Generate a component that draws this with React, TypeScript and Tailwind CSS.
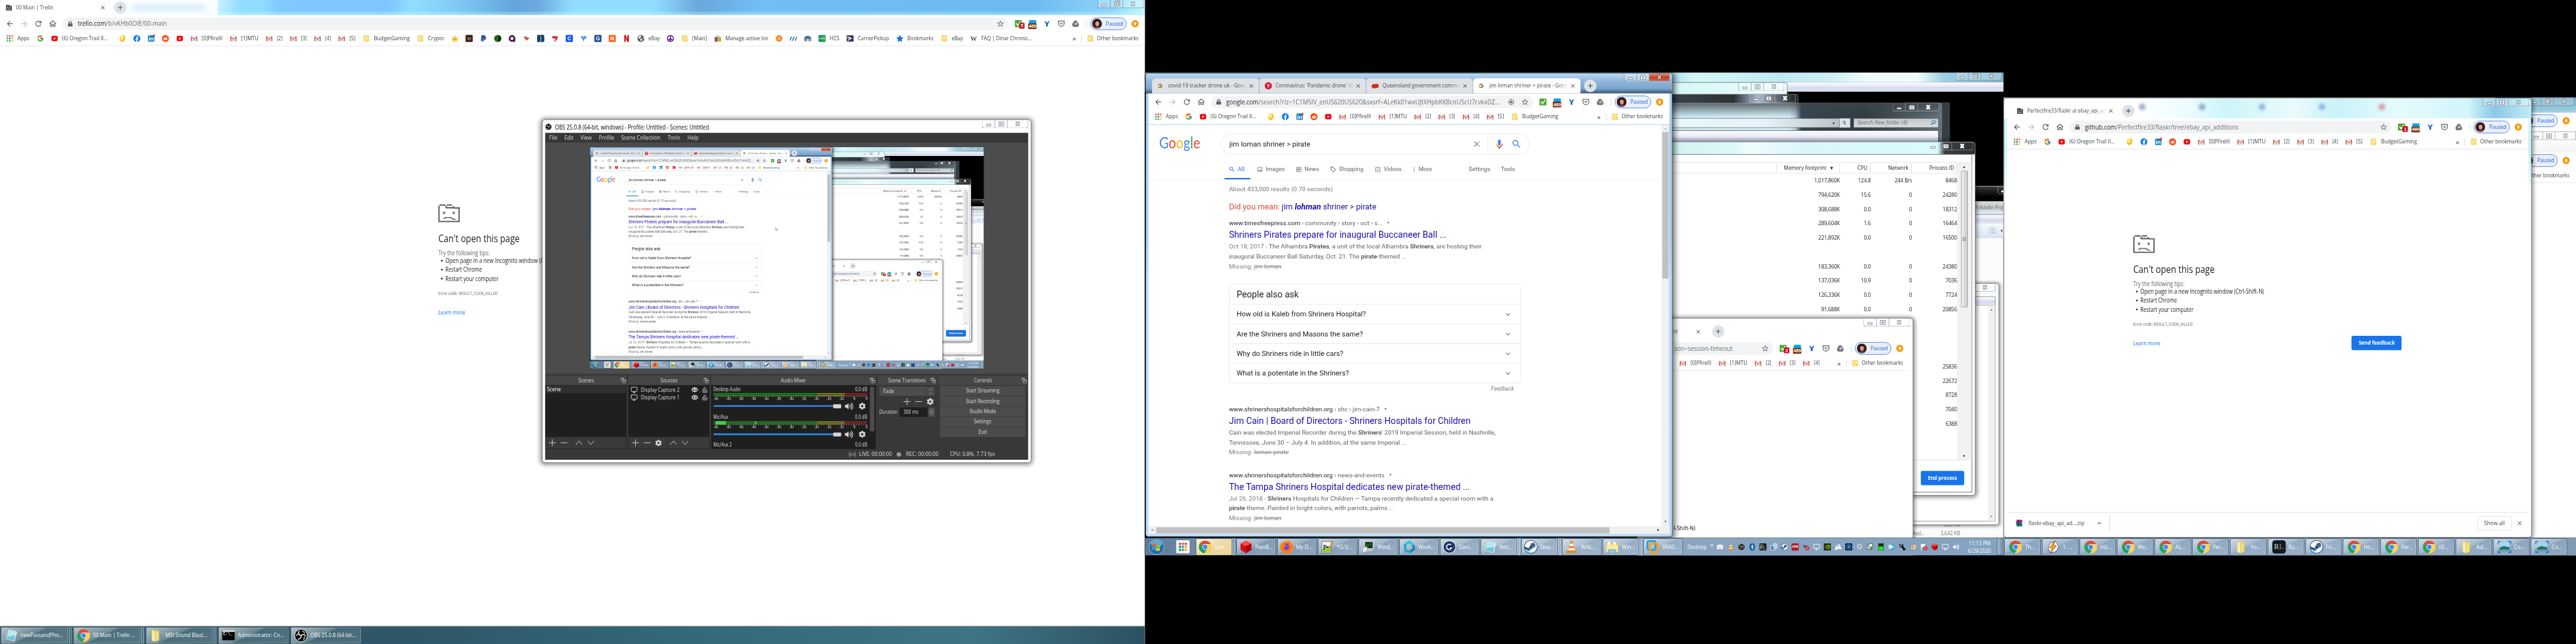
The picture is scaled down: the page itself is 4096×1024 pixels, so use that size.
import React, { ReactNode, useLayoutEffect, useRef } from "react";
import {
  FaFacebook, FaLinkedin, FaReddit, FaPaypal, FaCrown, FaPeace, FaStar, FaGlobeAmericas, FaDiscord,
  FaBluetoothB, FaSteam, FaCog, FaVolumeUp, FaFirefoxBrowser, FaLock,
} from "react-icons/fa";
import { FcGoogle } from "react-icons/fc";
import { SiNvidia, SiCorsair } from "react-icons/si";
import {
  MdArrowBack, MdArrowForward, MdRefresh, MdOutlineHome, MdStarBorder, MdGpsFixed, MdClose, MdAdd, MdSearch,
  MdOutlineImage, MdOutlineArticle, MdOutlineLocalOffer, MdOutlineSlideshow, MdMoreVert, MdKeyboardArrowDown,
} from "react-icons/md";
import { Monitor, Unlock, Eye, Radio } from "lucide-react";

/* One line of text squeezed or stretched to an exact width. */
function Fit({ w, className = "", children }: { w: number; className?: string; children: ReactNode }) {
  const ref = useRef<HTMLSpanElement>(null);
  useLayoutEffect(() => {
    const el = ref.current;
    if (el && el.offsetWidth) el.style.transform = `scaleX(${w / el.offsetWidth})`;
  }, [w, children]);
  return (
    <span className={"block shrink-0 " + className} style={{ width: w }}>
      <span ref={ref} className="inline-block origin-left whitespace-pre">{children}</span>
    </span>
  );
}

/* ---------- icons ---------- */
const Gmail = () => (
  <svg viewBox="0 0 16 16" className="size-4 shrink-0">
    <rect x="1" y="2" width="14" height="12" fill="#eceaea" />
    <path d="M3 14 8 9l5 5z" fill="#d5d2d2" />
    <path d="M1 14V3l7 6 7-6v11h-2V6.5L8 11 3 6.5V14z" fill="#d54b3d" />
  </svg>
);
const YouTube = () => (
  <svg viewBox="0 0 16 16" className="size-4 shrink-0">
    <rect x="1" y="2" width="14" height="12" rx="3" fill="#f00" />
    <path d="M6.3 5.2v5.6L11 8z" fill="#fff" />
  </svg>
);
const BmFolder = () => (
  <svg viewBox="0 0 16 16" className="size-4 shrink-0">
    <path d="M2.5 1.5h11v9l1 4h-12z" fill="#fde48a" stroke="#e8c454" />
    <path d="M11 14.5V11h2.5" fill="none" stroke="#e8c454" />
  </svg>
);
const AppsGrid = () => (
  <div className="grid size-[14px] shrink-0 grid-cols-3 gap-[2px]">
    {["#ea4335", "#ea4335", "#ea4335", "#34a853", "#4285f4", "#fbbc05", "#34a853", "#34a853", "#fbbc05"].map((c, i) => (
      <div key={i} style={{ background: c }} />
    ))}
  </div>
);
const TaskGrid = () => (
  <div className="grid size-[18px] shrink-0 grid-cols-3 gap-[2px]">
    {["#ef2b2b", "#ef2b2b", "#ef2b2b", "#1fa64a", "#2b7de0", "#f6b21b", "#1fa64a", "#1fa64a", "#f6b21b"].map((c, i) => (
      <div key={i} style={{ background: c }} />
    ))}
  </div>
);
const Chrome = ({ className = "size-[30px]" }: { className?: string }) => (
  <svg viewBox="0 0 48 48" className={"shrink-0 " + className}>
    <circle cx="24" cy="24" r="23" fill="#fcd04e" />
    <path d="M24 24 4.1 12.5A23 23 0 0 0 21 46.8L31 28z" fill="#1ea362" />
    <path d="M24 24 4.1 12.5A23 23 0 0 1 44 13.5H24z" fill="#dd4b3e" />
    <circle cx="24" cy="24" r="10.5" fill="#fff" />
    <circle cx="24" cy="24" r="8.3" fill="#4688f4" />
  </svg>
);
const Folder7 = () => (
  <svg viewBox="0 0 32 32" className="size-[30px] shrink-0">
    <path d="M6 3h9l8 2v22l-8 3-9-2z" fill="#e9cf6c" />
    <path d="m6 3 8 4v24l-8-3z" fill="#fbeea6" stroke="#d8ba55" strokeWidth=".6" />
    <path d="m14 7 9-2v22l-9 4z" fill="#f3dc80" stroke="#d0b04a" strokeWidth=".6" />
  </svg>
);
const Explorer = () => (
  <svg viewBox="0 0 32 32" className="size-[30px] shrink-0">
    <path d="M2 5h10l2 3h15v20H2z" fill="#f0d478" stroke="#c9a441" />
    <path d="M5 3h6v8H5zM18 5h7v6h-7z" fill="#fff" />
    <path d="M2 12h28v16H2z" fill="#fbe9a0" />
    <path d="M7 30v-8h18v8h-4v-4H11v4z" fill="#8cc7e8" stroke="#5da3cb" />
  </svg>
);
const Notepad = () => (
  <svg viewBox="0 0 32 32" className="size-[30px] shrink-0">
    <path d="m10 3 18 3-5 24-19-6z" fill="#6fc6d8" stroke="#e8f6fa" />
    <path d="m10 3 18 3-2 10-19 3z" fill="#b9e8ee" />
    <path d="m28 6 2 3-6 21-1 0z" fill="#e8eef0" />
  </svg>
);
const NotepadPP = () => (
  <svg viewBox="0 0 32 32" className="size-[30px] shrink-0">
    <rect x="3" y="3" width="22" height="27" fill="#f7f7f0" stroke="#444" />
    <path d="M4 20h20v9H4z" fill="#8bd12f" />
    <path d="M8 11v12M8 13q5-2 5 2t-5 3M14 17h6M17 14v6M20 17h5" fill="none" stroke="#111" strokeWidth="1.8" />
    <path d="M19 18 28 2l3 2-9 16z" fill="#f0a43c" stroke="#8b5a16" strokeWidth=".6" />
  </svg>
);
const Vlc = ({ className = "size-[30px]" }: { className?: string }) => (
  <svg viewBox="0 0 32 32" className={"shrink-0 " + className}>
    <path d="M4 25h24l2 5H2z" fill="#f08a1c" />
    <path d="M13.5 2h5l7 25h-19z" fill="#f58a1f" />
    <path d="m12 8h8l1.600 6H10.400zM9 19h14l1.600 5H7.400z" fill="#f5f5f5" />
  </svg>
);
const RedCube = ({ className = "size-[30px]" }: { className?: string }) => (
  <svg viewBox="0 0 32 32" className={"shrink-0 " + className}>
    <path d="m16 1 13 7v15l-13 8-13-8V8z" fill="#d90f16" />
    <path d="m16 1 13 7-13 6L3 8z" fill="#ff4a4a" />
    <path d="M16 14v17l13-8V8z" fill="#a90a10" />
  </svg>
);
const Steam = ({ className = "size-[30px]" }: { className?: string }) => (
  <div className={"flex shrink-0 items-center justify-center rounded-full bg-gradient-to-b from-[#10193a] to-[#1d7fb5] " + className}>
    <FaSteam className="size-full text-white/95 [clip-path:circle(46%)]" />
  </div>
);
const Obs = ({ className = "size-[30px]" }: { className?: string }) => (
  <svg viewBox="0 0 32 32" className={"shrink-0 " + className}>
    <circle cx="16" cy="16" r="15" fill="#0a0a0a" stroke="#e6e6e6" strokeWidth="1.500" />
    <g fill="none" stroke="#f0f0f0" strokeWidth="2.400">
      <path d="M12 5a6.500 6.500 0 0 0 4 11" />
      <path d="M27 18a6.500 6.500 0 0 0-11-2" />
      <path d="M8.500 24.500A6.500 6.500 0 0 0 16 16" />
      <path d="M19 5.500a6.500 6.500 0 0 1 5.500 6.500M21.500 26a6.500 6.500 0 0 0 2.500-7M5 17a6.500 6.500 0 0 1 6-5" strokeWidth="1.800" />
    </g>
  </svg>
);
const Winamp = ({ className = "size-[30px]" }: { className?: string }) => (
  <svg viewBox="0 0 32 32" className={"shrink-0 " + className}>
    <path d="m9 6 14-3 6 12-6 12-14 3L4 18z" fill="#fff" stroke="#222" />
    <path d="M20 1 7 18h7l-5 13 15-18h-7z" fill="#f8a22e" stroke="#6d3c05" />
  </svg>
);
const WinVdi = () => (
  <svg viewBox="0 0 32 32" className="size-[30px] shrink-0">
    <rect x="8" y="3" width="20" height="17" fill="#0c2b14" stroke="#ddd" strokeWidth="2" />
    <path d="M10 16l4-8 3 6 4-8 3 7" fill="none" stroke="#37d248" />
    <path d="m3 18 11-3v12l-11 2z" fill="#e7e7e7" stroke="#999" />
    <path d="M15 22h12v4H15z" fill="#ccc" />
  </svg>
);
const WinA = () => (
  <svg viewBox="0 0 32 32" className="size-[30px] shrink-0">
    <g fill="none" strokeWidth="6">
      <path d="M8 9 18 4l9 8" stroke="#36c2e8" />
      <path d="m27 12 1 9-9 7" stroke="#1488b8" />
      <path d="m19 28-11-4L7 9" stroke="#22a8d5" />
    </g>
  </svg>
);
const Dani = () => (
  <svg viewBox="0 0 32 32" className="size-[30px] shrink-0">
    <circle cx="16" cy="16" r="14.500" fill="#0a1a48" stroke="#d5dbe8" strokeWidth="2" />
    <circle cx="16" cy="16" r="9.500" fill="none" stroke="#6f8fe0" strokeWidth="1.500" />
    <path d="M20 12a6 6 0 1 0 1 6h-4" fill="none" stroke="#fff" strokeWidth="2.600" />
  </svg>
);
const VmBox = () => (
  <svg viewBox="0 0 32 32" className="size-[30px] shrink-0">
    <rect x="3" y="2" width="19" height="21" rx="4" fill="none" stroke="#2f9ee0" strokeWidth="5" />
    <rect x="9" y="8" width="19" height="21" rx="4" fill="none" stroke="#f6a51c" strokeWidth="5" />
  </svg>
);
const Runes = () => (
  <div className="flex size-[30px] shrink-0 items-center justify-center rounded-md bg-[#0e1c22] font-['Liberation_Serif'] text-[17px] leading-none text-[#ddd]">
    R<span className="text-[#f06a20]">L</span>
  </div>
);
const RunesSmall = () => (
  <svg viewBox="0 0 16 16" className="size-4 shrink-0">
    <rect width="16" height="16" rx="2" fill="#0e1c22" />
    <path d="M3 13V3h3q2 0 2 2.500T6 8H3l4 5" fill="none" stroke="#ddd" strokeWidth="1.200" />
    <path d="M10 5v8h4" fill="none" stroke="#f06a20" strokeWidth="1.600" />
  </svg>
);
const Cmd = () => (
  <div className="h-[25px] w-[30px] shrink-0 border border-[#bbb] bg-black">
    <div className="h-[4px] bg-[#ddd]" />
    <div className="pl-[2px] font-['Liberation_Mono'] text-[9px] font-bold leading-[10px] text-white">C:\_</div>
  </div>
);
const Capture = () => (
  <svg viewBox="0 0 32 32" className="size-[30px] shrink-0">
    <rect x="4" y="5" width="24" height="22" fill="#9fd6f5" />
    <path d="M4 18 14 14l14 3v10H4z" fill="#2d6f58" />
    <path d="M4 22h24v5H4z" fill="#5aa0c4" />
    <path d="M1 9V3h6M25 3h6v6M31 23v6h-6M7 29H1v-6" fill="none" stroke="#1b76c9" strokeWidth="2.500" />
  </svg>
);
const WinOrb = () => (
  <svg viewBox="0 0 36 36" className="size-9 shrink-0">
    <circle cx="18" cy="18" r="17" fill="#1d6fa6" stroke="#b7dcf0" />
    <ellipse cx="18" cy="10" rx="13" ry="8" fill="#8fcfee" opacity=".6" />
    <path d="M9 12q5-3 8 0l-1 6q-4-3-8 0z" fill="#e8582a" />
    <path d="M18 12q4 3 9 1l-1 6q-5 2-9-1z" fill="#86c440" />
    <path d="M8 19q4-3 8 0l-1 6q-4-3-8 0z" fill="#2fa3e6" />
    <path d="M17 19q4 3 9 1l-1 6q-5 2-9-1z" fill="#fbc52d" />
  </svg>
);
const MicIcon = () => (
  <svg viewBox="0 0 24 24" className="mr-[14px] size-[25px]">
    <rect x="9" y="2" width="6" height="13" rx="3" fill="#4285f4" />
    <path d="M11 18h2v4h-2z" fill="#34a853" />
    <path d="M5 11h2a5 5 0 0 0 1.500 4.500L7 17a7 7 0 0 1-2-6z" fill="#fbbc05" />
    <path d="M12 17a5 5 0 0 0 5-6h2a7 7 0 0 1-12 6l1.500-1.500A5 5 0 0 0 12 17z" fill="#ea4335" />
  </svg>
);
const SadPage = ({ small = false }: { small?: boolean }) => (
  <svg viewBox="0 0 48 40" className={small ? "size-4 shrink-0" : "h-10 w-12"} fill="none" stroke="#5f6368" strokeWidth="3">
    {small ? (
      <>
        <path d="M4 2h24l2 6h14v32H4z" fill="#4b4f54" stroke="none" />
        <path d="M13 16h6v5h-6zM29 16h6v5h-6zM14 33v-4h20v4h-4v-2H18v2z" fill="#fff" stroke="none" />
      </>
    ) : (
      <>
        <path d="M1.500 3v35.500h45V8H34M3 1.500h13M19 1.500h12M17.500 3v5M17 7.500h17V4" />
        <path d="m10.500 16.500 5 5m0-5-5 5M32 16.500l5 5m0-5-5 5" strokeWidth="1.800" />
        <path d="M11 31.500h4v-2h14v2h4v2h6" strokeWidth="2" />
      </>
    )}
  </svg>
);

/* ---------- browser chrome ---------- */
type Bm = { icon: ReactNode; text?: string; w?: number; wide?: boolean };
const Sq = ({ bg, fg = "#fff", t }: { bg: string; fg?: string; t: string }) => (
  <span className="flex size-4 shrink-0 items-center justify-center rounded-[2px] font-['Liberation_Sans'] text-[12px] font-bold leading-none" style={{ background: bg, color: fg }}>
    {t}
  </span>
);
const baseBookmarks: Bm[] = [
  { icon: <AppsGrid />, text: "Apps", w: 27 },
  { icon: <FcGoogle className="size-4" /> },
  { icon: <YouTube />, text: "(6) Oregon Trail II...", w: 102, wide: true },
  { icon: <svg viewBox="0 0 16 16" className="size-4"><ellipse cx="8" cy="8" rx="6" ry="8" fill="#f6c51b" transform="rotate(18 8 8)" /><ellipse cx="6.500" cy="6.500" rx="3" ry="5" fill="#ffef9a" transform="rotate(18 8 8)" /></svg> },
  { icon: <FaFacebook className="size-4 text-[#0f7bf0]" /> },
  { icon: <span className="relative"><FaLinkedin className="size-4 text-[#0077b5]" /><span className="absolute -top-px -right-px size-[5px] rounded-full bg-[#f03b3b]" /></span> },
  { icon: <FaReddit className="size-4 text-[#ff4500]" /> },
  { icon: <YouTube /> },
  { icon: <Gmail />, text: "[0]PfireIII", w: 47 },
  { icon: <Gmail />, text: "[1]MTU", w: 39 },
  { icon: <Gmail />, text: "[2]", w: 13 },
  { icon: <Gmail />, text: "[3]", w: 13 },
  { icon: <Gmail />, text: "[4]", w: 13 },
  { icon: <Gmail />, text: "[5]", w: 14 },
  { icon: <BmFolder />, text: "BudgetGaming", w: 80 },
];
const moreBookmarks: Bm[] = [
  { icon: <BmFolder />, text: "Crypto", w: 36 },
  { icon: <FaCrown className="size-4 text-[#f9b413]" /> },
  { icon: <Sq bg="#2a2320" fg="#f07030" t="w" /> },
  { icon: <FaPaypal className="size-4 text-[#1f4fa5]" /> },
  { icon: <span className="size-4 rounded-full bg-[repeating-linear-gradient(90deg,#0a2d0a_0_2px,#2f9c35_2px_3px)]" /> },
  { icon: <svg viewBox="0 0 16 16" className="size-4"><circle cx="8" cy="8" r="5.500" fill="none" stroke="#4b1152" strokeWidth="4" /><path d="M11 8h4v8h-4z" fill="#4b1152" /></svg> },
  { icon: <svg viewBox="0 0 16 16" className="size-4"><path d="M1 4h6l8 3-7 6-2-3z" fill="#e0444c" /><path d="m7 6 7 2-4 3z" fill="#5780d0" /></svg> },
  { icon: <Sq bg="#14406b" fg="#8ec1f0" t=")" /> },
  { icon: <svg viewBox="0 0 16 16" className="size-4"><path d="M1 3h13q1 6-5 11l-4 1q5-4 4-7H3z" fill="#d42b35" /></svg> },
  { icon: <Sq bg="#1652f0" t="C" /> },
  { icon: <svg viewBox="0 0 16 16" className="size-4"><path d="m1 5 5-3 2 4 2-4 5 3-3 4-2-1-2 7-3-7z" fill="#3c8cf0" /></svg> },
  { icon: <Sq bg="#1d4f9e" t="G" /> },
  { icon: <Sq bg="#f26a21" t="N" /> },
  { icon: <svg viewBox="0 0 16 16" className="size-4"><path d="M3 0h3v16H3zM10 0h3v16h-3z" fill="#b1060f" /><path d="M3 0h3l7 16h-3z" fill="#e50914" /></svg> },
  { icon: <FaGlobeAmericas className="size-4 text-[#5b6065]" />, text: "eBay", w: 25 },
  { icon: <FaPeace className="size-4 text-[#5a0f96]" /> },
  { icon: <BmFolder />, text: "[Main]", w: 33 },
  { icon: <svg viewBox="0 0 16 16" className="size-4"><path d="M5 5V3q3-4 6 0v2" fill="none" stroke="#444" /><path d="M1 5h4v10H1z" fill="#e53238" /><path d="M5 5h3v10H5z" fill="#0064d2" /><path d="M8 5h4v10H8z" fill="#f5af02" /><path d="M12 5h3v10h-3z" fill="#86b817" /></svg>, text: "Manage active list", w: 96 },
  { icon: <svg viewBox="0 0 16 16" className="size-4"><circle cx="8" cy="8" r="6" fill="none" stroke="#f5821f" strokeWidth="3.500" strokeDasharray="3 1" /><circle cx="8" cy="8" r="5.500" fill="#f5821f" /><path d="M5 6.500h6M5 9.500h6" stroke="#fff" strokeWidth="1.500" /></svg> },
  { icon: <svg viewBox="0 0 16 16" className="size-4"><path d="m0 13 4-9M6 13l4-9M12 13l4-9" stroke="#1a69c5" strokeWidth="2.200" /></svg> },
  { icon: <svg viewBox="0 0 16 16" className="size-4"><path d="M0 14V9a8 7 0 0 1 16 0v5h-2V9h-1v5h-2V9h-1v5H9V9H7v5H5V9H4v5H2z" fill="#52708f" /></svg> },
  { icon: <svg viewBox="0 0 16 16" className="size-4"><path d="M0 0h16v16H0z" fill="#128a6a" /><path d="M8 0h8v16H8z" fill="#2aa64a" /><g fill="none" stroke="#fff"><circle cx="3.500" cy="8" r="1.500" /><circle cx="8" cy="8" r="1.500" /><circle cx="12.500" cy="8" r="1.500" /></g></svg>, text: "HCS", w: 22 },
  { icon: <svg viewBox="0 0 16 16" className="size-4"><path d="M0 1h16v14H0z" fill="#333366" /><path d="m2 4 11 3-11 7 3-5 5-1-8-1z" fill="#fff" /></svg>, text: "CarrierPickup", w: 70 },
  { icon: <FaStar className="size-4 text-[#1a73e8]" />, text: "Bookmarks", w: 58 },
  { icon: <BmFolder />, text: "eBay", w: 25 },
  { icon: <span className="flex w-4 justify-center font-['Liberation_Serif'] text-[15px] font-bold leading-none text-[#555]">W</span>, text: "FAQ | Dinar Chronic...", w: 113 },
];
const BmItem = ({ b }: { b: Bm }) => (
  <div className={"flex items-center gap-[9px] " + (b.wide ? "mr-[25px]" : "mr-[16px]")}>
    <span className="flex w-4 shrink-0 justify-center">{b.icon}</span>
    {b.text && <Fit w={b.w || 40}>{b.text}</Fit>}
  </div>
);
function Pill() {
  return (
    <div className="flex h-7 w-[81px] shrink-0 items-center gap-[9px] rounded-full border border-[#1a62cf] bg-[#e9effa] pl-[3px]">
      <svg viewBox="0 0 22 22" className="size-[22px] shrink-0">
        <circle cx="11" cy="11" r="11" fill="#3c1c1c" />
        <ellipse cx="11.500" cy="10.500" rx="4.200" ry="6" fill="#d5a18d" />
        <path d="M5 9q2-7 7-6t5 6q-3-4-7-3t-5 3z" fill="#2b1212" />
        <path d="M5 20q6-5 13-1l-3 3H8z" fill="#6c4a52" />
      </svg>
      <Fit w={38} className="text-[13px] text-[#1a62cf]">Paused</Fit>
    </div>
  );
}
const UpdateDot = () => (
  <div className="flex size-4 shrink-0 items-center justify-center rounded-full bg-[#f29900]">
    <svg viewBox="0 0 10 10" className="size-[10px]"><path d="m5 1 4 4H6.500v4h-3V5H1z" fill="#fff" /></svg>
  </div>
);
function Extensions({ badge }: { badge?: string }) {
  return (
    <div className="flex shrink-0 items-center gap-4 font-['Liberation_Sans'] text-[11px] font-bold leading-none text-white">
      <div className="relative">
        <svg viewBox="0 0 16 16" className="size-4"><rect width="16" height="16" rx="2" fill="#4ca72e" /><path d="m3.500 7 3.500 5 6-9" fill="none" stroke="#fff" strokeWidth="2.200" /></svg>
        {badge && <span className="absolute top-[6px] left-[10px] rounded-[2px] bg-[#d0021b] px-[3px] py-[1px]">{badge}</span>}
      </div>
      <div className="relative size-4">
        <div className="h-[11px] w-4 rounded-[1px] bg-[#0aa2ee]" />
        <span className="absolute top-[7px] -left-[2px] rounded-[2px] bg-[#7a3107] px-[1px] py-[1px] tracking-[-0.3px]">469</span>
      </div>
      <svg viewBox="0 0 16 16" className="size-4"><path d="m2 2 4 1 2 4 2-4 4-1-4 7v5H6V9z" fill="#1c66b8" /><path d="m3 3 3 5" stroke="#6bb5ee" /></svg>
      <svg viewBox="0 0 16 16" className="size-4" fill="none" stroke="#6f7276" strokeWidth="2"><path d="M1.500 2h13v5.500a6.500 6.500 0 0 1-13 0z" /><path d="m5 6 3 3 3-3" /></svg>
      <svg viewBox="0 0 16 16" className="size-4"><path d="M5.500 1h5L16 10l-2.500 5h-11L0 10z" fill="#757575" /><path d="m8 6 2.500 4h-5z" fill="#fff" /><path d="M10.500 1 16 10h-5L8 6z" fill="#9a9a9a" /></svg>
    </div>
  );
}
function Toolbar({ host, path, hostW, badge, extra, target, short }: { host: string; path: string; hostW: number; badge?: string; extra?: boolean; target?: boolean; short?: boolean }) {
  const list = short ? baseBookmarks.slice(8, 13) : extra ? [...baseBookmarks, ...moreBookmarks] : baseBookmarks;
  return (
    <div className="border-b border-[#dadce0] bg-white">
      <div className="flex h-9 items-center pr-[14px] pt-[1px]">
        {!short && (
          <div className="flex w-[140px] shrink-0 items-center gap-3 pl-[12px] text-[20px] text-[#5a5e63]">
            <MdArrowBack /><MdArrowForward className="text-[#bcbec1]" /><MdRefresh /><MdOutlineHome />
          </div>
        )}
        <div className={"flex h-7 flex-1 items-center bg-[#f1f3f4] pr-[9px] text-[14px] text-[#6b6f74] " + (short ? "rounded-r-full pl-[3px]" : "rounded-full pl-[11px]")}>
          {!short && <FaLock className="mr-[11px] size-3 text-[#5f6368]" />}
          <Fit w={hostW}><span className="text-[#202124]">{host}</span>{path}</Fit>
          <div className="ml-auto flex items-center gap-[14px] text-[18px] text-[#5f6368]">
            {target && <MdGpsFixed className="size-4" />}
            <MdStarBorder />
          </div>
        </div>
        <div className="ml-[14px] flex items-center">
          <Extensions badge={badge} />
          <div className="mx-[8px] ml-[16px] h-4 w-px bg-[#ccc]" />
          <Pill />
          <div className="w-[11px]" />
          <UpdateDot />
        </div>
      </div>
      <div className="flex h-[32px] items-center overflow-hidden pl-[14px] text-[12px] text-[#3c4043]">
        {list.map((b, i) => <BmItem key={i} b={b} />)}
        <span className="ml-auto pr-[12px] text-[16px] leading-none">»</span>
        <div className="mr-[11px] h-4 w-px bg-[#ccc]" />
        <BmFolder />
        <Fit w={93} className="ml-[7px] mr-[14px]">Other bookmarks</Fit>
      </div>
    </div>
  );
}
function Caption({ tone = "glass", restore = false }: { tone?: "glass" | "dark" | "red"; restore?: boolean }) {
  const line = tone === "dark" ? "border-white/50" : "border-[#6b7780]/80";
  const x = tone === "dark" ? "#fff" : "#555a66";
  return (
    <div className={"flex h-[18px] w-[103px] shrink-0 items-center rounded-b-[4px] border border-t-0 " + line + (tone === "glass" ? " bg-white/25" : tone === "red" ? " bg-white/30" : "")}>
      <div className={"flex h-full w-7 items-center justify-center border-r " + line}>
        <div className="mt-[5px] h-[5px] w-[11px] rounded-[1px] border border-[#555a66] bg-white" />
      </div>
      <div className={"flex h-full w-7 items-center justify-center border-r " + line}>
        <div className={"flex items-center justify-center border border-[#555a66] bg-white " + (restore ? "size-[10px] shadow-[2px_-2px_0_-1px_#fff,2px_-2px_0_0_#555a66]" : "h-[10px] w-[12px]")}>
          <div className="size-[4px] border border-[#555a66]" />
        </div>
      </div>
      <div className={"flex h-full flex-1 items-center justify-center " + (tone === "red" ? "rounded-br-[3px] bg-gradient-to-b from-[#e0947f] via-[#c2402a] to-[#d0603c]" : "")}>
        <svg viewBox="0 0 12 12" className="size-[11px]"><path d="m2 1 8 10M10 1 2 11" stroke={tone === "red" ? "#6b2a20" : x} strokeWidth="4" /><path d="m2.300 1.500 7.400 9M9.700 1.500l-7.400 9" stroke="#fff" strokeWidth="2" /></svg>
      </div>
    </div>
  );
}
function Tab({ icon, text, w, active, textW, clip }: { icon: ReactNode; text: string; w: number; active?: boolean; textW: number; clip?: boolean }) {
  return (
    <div className={"flex h-[34px] shrink-0 items-center rounded-t-[8px] pl-[12px] pr-[10px] text-[12px] text-[#45494d] " + (active ? "bg-white" : "border-r border-[#9ba0a6] bg-[#dee1e6]")} style={{ width: w }}>
      <span className="mr-[8px] flex size-4 items-center">{icon}</span>
      <span className={"shrink-0 overflow-hidden " + (clip ? "[mask-image:linear-gradient(90deg,#000_88%,transparent)]" : "")}><Fit w={textW}>{text}</Fit></span>
      <MdClose className="ml-auto size-[14px] shrink-0 text-[#45494d]" />
    </div>
  );
}
const NewTab = () => (
  <div className="flex size-7 shrink-0 items-center justify-center rounded-full bg-[#dee3e8] text-[#45494d]"><MdAdd className="size-[18px]" /></div>
);
function CantOpen({ feedback }: { feedback?: boolean }) {
  return (
    <div className="flex w-[600px] flex-col text-[14px] leading-[20px] text-[#202124]">
      <SadPage />
      <div className="mt-[19px] flex h-8 items-center text-[23px]"><Fit w={182}>Can't open this page</Fit></div>
      <div className="mt-[8px] flex h-5 items-center text-[#5f6368]"><Fit w={114}>Try the following tips:</Fit></div>
      {([["Open page in a new Incognito window (Ctrl-Shift-N)", 276], ["Restart Chrome", 82], ["Restart your computer", 119]] as [string, number][]).map(([t, w], i) => (
        <div key={i} className={"flex h-5 items-center " + (i === 0 ? "-mt-[3px]" : "")}><span className="mr-[6px] ml-[6px] size-1 rounded-full bg-[#202124]" /><Fit w={w}>{t}</Fit></div>
      ))}
      <div className="mt-[13px] flex h-5 items-center text-[11px] text-[#5f6368]"><Fit w={133}>Error code: RESULT_CODE_KILLED</Fit></div>
      <div className="mt-[16px] flex h-8 items-center justify-between text-[13px]">
        <Fit w={60} className="text-[#1a73e8]">Learn more</Fit>
        {feedback && <div className="flex h-8 w-[112px] items-center justify-center rounded bg-[#1a73e8] text-[12px] font-bold text-white"><Fit w={81}>Send feedback</Fit></div>}
      </div>
    </div>
  );
}

/* ---------- taskbars ---------- */
type Tb = { icon: ReactNode; text: string; w: number; stack?: boolean };
function TaskButton({ b, width, pitch, pad, active }: { b: Tb; width: number; pitch: number; pad: number; active?: boolean }) {
  return (
    <div className="flex h-[38px] shrink-0" style={{ width: pitch }}>
      <div
        className={"flex h-full shrink-0 items-center overflow-hidden rounded-[3px] border border-[#28404f]/80 text-[12px] text-white shadow-[inset_0_0_0_1px_rgba(255,255,255,.45)] " +
          (active ? "bg-gradient-to-br from-[#fdf3dc] via-[#ecd9a8] to-[#f3d68c]" : "bg-[linear-gradient(155deg,rgba(255,255,255,.62),rgba(255,255,255,.26)_45%,rgba(255,255,255,.1)_46%,rgba(255,255,255,.16))]")}
        style={{ width: b.stack ? width - 7 : width, paddingLeft: pad }}
      >
        {b.icon}
        <Fit w={b.w} className="ml-[6px]">{b.text}</Fit>
      </div>
      {b.stack && <div className="flex gap-[1px]"><div className="h-full w-[3px] rounded-r border-r border-white/50 bg-white/20" /><div className="h-full w-[3px] rounded-r border-r border-white/50 bg-white/20" /></div>}
    </div>
  );
}
const midTasks: Tb[] = [
  { icon: <Chrome />, text: "Goo...", w: 30, stack: true },
  { icon: <RedCube />, text: "PeerB...", w: 39 },
  { icon: <span className="flex size-[30px] shrink-0 items-center justify-center rounded-full bg-[radial-gradient(circle,#7b3fd8_35%,#ffb02e_60%)]"><FaFirefoxBrowser className="size-[30px] text-[#ff7a1a]" /></span>, text: "My D...", w: 37 },
  { icon: <NotepadPP />, text: "*G:\\[...", w: 35 },
  { icon: <WinVdi />, text: "Wind...", w: 37 },
  { icon: <WinA />, text: "WinA...", w: 38 },
  { icon: <Dani />, text: "Dani...", w: 32 },
  { icon: <Notepad />, text: "Not...", w: 30, stack: true },
  { icon: <Steam />, text: "Stea...", w: 31, stack: true },
  { icon: <Vlc />, text: "WAL...", w: 34 },
  { icon: <Explorer />, text: "Win...", w: 31, stack: true },
  { icon: <VmBox />, text: "JIRA0...", w: 36 },
];
const rightTasks: Tb[] = [
  { icon: <Chrome />, text: "Th...", w: 23 }, { icon: <Winamp />, text: "1. ...", w: 22 }, { icon: <Chrome />, text: "Inb...", w: 26 },
  { icon: <Chrome />, text: "We...", w: 25 }, { icon: <Chrome />, text: "AL...", w: 24 }, { icon: <Chrome />, text: "Per...", w: 26 },
  { icon: <Folder7 />, text: "Yo...", w: 23 }, { icon: <Runes />, text: "Ru...", w: 23 }, { icon: <Steam />, text: "Fri...", w: 22 },
  { icon: <Chrome />, text: "Ho...", w: 24 }, { icon: <Chrome />, text: "Per...", w: 26 }, { icon: <Chrome />, text: "00 ...", w: 24 },
  { icon: <Folder7 />, text: "Ad...", w: 24 }, { icon: <Capture />, text: "Co...", w: 24 }, { icon: <Capture />, text: "Co...", w: 24 },
];
const leftTasks: Tb[] = [
  { icon: <Notepad />, text: "newPassandPho...", w: 95, stack: true }, { icon: <Chrome />, text: "00 Main | Trello ...", w: 94, stack: true },
  { icon: <Folder7 />, text: "MSI Sound Blast...", w: 94, stack: true }, { icon: <Cmd />, text: "Administrator: Co...", w: 103 },
  { icon: <Obs />, text: "OBS 25.0.8 (64-bit...", w: 102 },
];
const tray: ReactNode[] = [
  <FaDiscord className="size-4" />, <Vlc className="size-4" />, <Obs className="size-4" />,
  <span className="flex h-4 w-3 items-center justify-center rounded-full bg-[#0a5aa8]"><FaBluetoothB className="size-3" /></span>,
  <RunesSmall />,
  <svg viewBox="0 0 16 16" className="size-4"><rect x="1" y="5" width="10" height="10" fill="#4f83b8" stroke="#fff" /><rect x="8" y="1" width="7" height="10" fill="#a9cbe8" stroke="#fff" /></svg>,
  <Steam className="size-4" />,
  <span className="flex size-4 items-center justify-center rounded-[2px] bg-[#b01c22] font-['Liberation_Sans'] text-[7px] leading-none font-bold text-white"><Fit w={14}>APM</Fit></span>,
  <svg viewBox="0 0 16 16" className="size-4"><path d="m1 3 11 3-8 4z" fill="#555" /><circle cx="11" cy="11" r="4.500" fill="#d8232a" /><path d="m9 9 4 4m0-4-4 4" stroke="#fff" /></svg>,
  <Monitor className="size-4" />, <span className="flex size-4 items-center justify-center bg-[#2a3020]"><SiNvidia className="size-3 text-[#76b900]" /></span>,
  <SiCorsair className="size-4" />,
  <svg viewBox="0 0 16 16" className="size-4"><rect width="16" height="16" rx="2" fill="#041a3a" /><circle cx="8" cy="8" r="5" fill="none" stroke="#42a0ff" strokeWidth="1.500" /><circle cx="8" cy="8" r="2" fill="#9fd4ff" /></svg>,
  <svg viewBox="0 0 16 16" className="size-4"><circle cx="8" cy="7" r="5.500" fill="#c5ced6" /><circle cx="8" cy="7" r="2" fill="#5b7c8f" /><path d="M4 15q4-3 8 0z" fill="#aab" /></svg>,
  <svg viewBox="0 0 16 16" className="size-4"><path d="M1 4h9v9H1z" fill="#ddd" stroke="#333" /><path d="M5 1h8v7H5z" fill="#fff" stroke="#333" /><path d="m8 8 7 4-7 4z" fill="#1bb02c" /></svg>,
  <svg viewBox="0 0 16 16" className="size-4"><rect x="2" width="12" height="16" fill="#0a3d0a" /><path d="M3 7h10v8H3z" fill="#2ae62a" /></svg>,
  <svg viewBox="0 0 16 16" className="size-4"><circle cx="9" cy="8" r="7" fill="#4aa3e0" /><path d="M1 3h7v9H1z" fill="#e4eef5" /><circle cx="10" cy="8" r="2" fill="#fff" /></svg>,
  <svg viewBox="0 0 16 16" className="size-4"><path d="m1 1 4 2 4-2 1 6 6 7-6 2-3-6-5-2z" fill="#111" /><circle cx="5" cy="5" r="1.500" fill="#fff" /></svg>,
  <Winamp className="size-4" />,
  <svg viewBox="0 0 16 16" className="size-4"><path d="M2 1v14M2 2h8v6H2" fill="#fff" stroke="#fff" strokeWidth="1.500" /><circle cx="11" cy="11" r="4.500" fill="#d8232a" /><path d="m9 9 4 4m0-4-4 4" stroke="#fff" /></svg>,
  <RedCube className="size-4" />, <Monitor className="size-4" />, <FaVolumeUp className="size-[14px]" />,
];
function MidTaskbar() {
  return (
    <div className="absolute top-[1040px] left-0 flex h-10 w-[1920px] items-center overflow-hidden border-t border-[#2a3a46] bg-[linear-gradient(90deg,#5f7a95,#6f8aa5_6%,#90a8c2_45%,#88a4c0_70%,#84a3c0)] text-[12px] text-white">
      <div className="ml-[8px] flex w-[62px]"><WinOrb /></div>
      <div className="mr-[14px] flex h-[29px] w-[30px] items-center justify-center rounded-[2px] bg-[#f4f5f6]"><TaskGrid /></div>
      {midTasks.map((b, i) => <TaskButton key={i} b={b} width={88} pitch={91} pad={5} active={i === 0} />)}
      <div className="ml-[7px] flex"><Fit w={43}>Desktop</Fit><span className="-mt-[8px] ml-[8px] text-[15px]">»</span></div>
      <div className="ml-[7px] flex gap-2">{tray.map((t, i) => <span key={i} className="flex size-4 items-center justify-center">{t}</span>)}</div>
      <div className="ml-[16px] flex w-[56px] flex-col items-center leading-[17px]"><Fit w={49}>11:13 PM</Fit><Fit w={52}>6/29/2020</Fit></div>
      <div className="ml-auto h-full w-[15px] border border-[#3e5366] bg-gradient-to-r from-[#a8bfd4] to-[#6f8aa5]" />
    </div>
  );
}

/* ---------- search page ---------- */
function Result({ host, crumbs, urlW, title, titleW, l1, w1, l2, w2, miss, missW }: {
  host: string; crumbs: string; urlW: number; title: string; titleW: number; l1: ReactNode; w1: number; l2: ReactNode; w2: number; miss: string; missW: number;
}) {
  return (
    <div className="flex flex-col text-[14px] leading-[22px] text-[#5b5f64]">
      <div className="flex h-[22px] items-center"><Fit w={urlW}><span className="text-[#202124]">{host}</span>{crumbs}</Fit><span className="ml-[9px] text-[8px] text-[#70757a]">▼</span></div>
      <div className="flex h-[30px] items-center text-[20px] text-[#1a0dab]"><Fit w={titleW}>{title}</Fit></div>
      <Fit w={w1} className="h-[22px]">{l1}</Fit>
      <Fit w={w2} className="h-[22px]">{l2}</Fit>
      <Fit w={missW} className="h-[22px] text-[#7a7e83]">Missing: <s>{miss}</s></Fit>
    </div>
  );
}
const Nav = ({ icon, text, w, cell, on }: { icon?: ReactNode; text: string; w: number; cell: number; on?: boolean }) => (
  <div className={"relative flex h-full shrink-0 items-center gap-[6px] pt-[11px] " + (on ? "text-[#1a73e8]" : "text-[#5f6368]")} style={{ width: cell }}>
    {icon}<Fit w={w}>{text}</Fit>
    {on && <div className="absolute bottom-0 -left-[10px] h-[3px] w-[58px] bg-[#1a73e8]" />}
  </div>
);
function SearchPage() {
  return (
    <div className="flex h-full w-[1148px] flex-col overflow-hidden bg-white pt-5 font-['Roboto',sans-serif]">
      <div className="flex h-[46px] shrink-0 items-center pl-[24px]">
        <div className="h-[34px] w-[137px] font-['Lato',sans-serif] text-[34px] leading-[27px]">
          <Fit w={92}><span className="text-[#4285f4]">G</span><span className="text-[#ea4335]">o</span><span className="text-[#fbbc05]">o</span><span className="text-[#4285f4]">g</span><span className="text-[#34a853]">l</span><span className="text-[#ea4335]">e</span></Fit>
        </div>
        <div className="flex h-[46px] w-[691px] items-center rounded-full border border-[#dfe1e5] pr-[16px] pl-[19px] text-[16px] text-[#202124]">
          <Fit w={181}>{"jim loman shriner > pirate"}</Fit>
          <MdClose className="ml-auto size-[22px] text-[#8a8f94]" />
          <div className="mx-[13px] h-7 w-px bg-[#dfe1e5]" />
          <MicIcon />
          <MdSearch className="size-[24px] text-[#4285f4]" />
        </div>
      </div>
      <div className="flex h-[57px] shrink-0 border-b border-[#ebebeb] pl-[180px] text-[13px]">
        <Nav on icon={<MdSearch className="-ml-px size-[15px]" />} text="All" w={15} cell={62} />
        <Nav icon={<MdOutlineImage className="size-[14px]" />} text="Images" w={43} cell={87} />
        <Nav icon={<MdOutlineArticle className="size-[14px]" />} text="News" w={33} cell={77} />
        <Nav icon={<MdOutlineLocalOffer className="size-[14px]" />} text="Shopping" w={55} cell={100} />
        <Nav icon={<MdOutlineSlideshow className="size-[14px]" />} text="Videos" w={40} cell={84} />
        <Nav icon={<MdMoreVert className="-mx-[3px] size-[14px]" />} text="More" w={30} cell={126} />
        <Nav text="Settings" w={48} cell={72} />
        <Nav text="Tools" w={32} cell={60} />
      </div>
      <div className="flex flex-col pl-[180px]">
        <div className="flex h-[42px] items-center text-[14px] text-[#70757a]"><Fit w={232}>About 433,000 results (0.70 seconds)</Fit></div>
        <div className="mb-[10px] flex h-[34px] items-center text-[18px] text-[#1a0dab]">
          <Fit w={330}><span className="text-[#dd4b39]">Did you mean: </span>jim <b><i>lohman</i></b>{" shriner > pirate"}</Fit>
        </div>
        <Result host="www.timesfreepress.com" crumbs=" › community › story › oct › s..." urlW={343} title="Shriners Pirates prepare for inaugural Buccaneer Ball ..." titleW={487}
          l1={<><span className="text-[#7a7e83]">Oct 18, 2017 - </span>The Alhambra <b>Pirates</b>, a unit of the local Alhambra <b>Shriners</b>, are hosting their</>} w1={565}
          l2={<>inaugural Buccaneer Ball Saturday, Oct. 21. The <b>pirate</b>-themed ...</>} w2={397} miss="jim loman" missW={117} />
        <div className="mt-[29px] w-[653px] rounded-lg border border-[#dfe1e5] text-[16px] text-[#202124]">
          <div className="flex h-[44px] items-center px-4 text-[20px]"><Fit w={139}>People also ask</Fit></div>
          {([["How old is Kaleb from Shriners Hospital?", 289], ["Are the Shriners and Masons the same?", 282], ["Why do Shriners ride in little cars?", 239], ["What is a potentate in the Shriners?", 251]] as [string, number][]).map(([q, w]) => (
            <div key={q} className="flex h-[44px] items-center justify-between border-t border-[#dfe1e5] pr-[18px] pl-4"><Fit w={w}>{q}</Fit><MdKeyboardArrowDown className="size-[20px] text-[#70757a]" /></div>
          ))}
        </div>
        <div className="mb-[23px] flex h-6 w-[637px] items-center justify-end text-[12px] text-[#70757a] italic"><Fit w={51}>Feedback</Fit></div>
        <Result host="www.shrinershospitalsforchildren.org" crumbs=" › shc › jim-cain-7" urlW={337} title="Jim Cain | Board of Directors - Shriners Hospitals for Children" titleW={540}
          l1={<>Cain was elected Imperial Recorder during the <b>Shriners</b>' 2019 Imperial Session, held in Nashville,</>} w1={596}
          l2="Tennessee, June 30 – July 4. In addition, at the same Imperial ..." w2={397} miss="loman pirate" missW={134} />
        <div className="h-[29px]" />
        <Result host="www.shrinershospitalsforchildren.org" crumbs=" › news-and-events" urlW={348} title="The Tampa Shriners Hospital dedicates new pirate-themed ..." titleW={539}
          l1={<><span className="text-[#7a7e83]">Jul 26, 2018 - </span><b>Shriners</b> Hospitals for Children — Tampa recently dedicated a special room with a</>} w1={591}
          l2={<><b>pirate</b> theme. Painted in bright colors, with parrots, palms ...</>} w2={369} miss="jim loman" missW={117} />
      </div>
    </div>
  );
}
function SearchWindow() {
  return (
    <div className="absolute top-[1px] left-[1px] flex h-[1038px] w-[1179px] flex-col overflow-hidden rounded-[7px] border border-black bg-[linear-gradient(180deg,#a7cdef,#a9cdec_36%,#b8dafa_45%,#b8dafa)] px-[6px] shadow-[0_2px_14px_4px_rgba(0,0,0,.6)]">
      <div className="-mx-[6px] flex h-[45px] shrink-0 bg-[linear-gradient(180deg,#bcd9f3,#8fb6da_40%,#7ba6cf_75%,#39536d)] pl-[14px]">
        <div className="flex items-end pt-[11px]">
          <Tab icon={<FcGoogle />} text="covid-19 tracker drone uk - Goog" w={240} textW={176} clip />
          <Tab icon={<span className="flex size-4 items-center justify-center rounded-full bg-[#e3172e] text-[11px] font-bold text-white">Y</span>} text="Coronavirus: 'Pandemic drone' th" w={239} textW={174} clip />
          <Tab icon={<span className="h-[9px] w-4 rotate-[-8deg] rounded bg-[#d4301f]" />} text="Queensland government commit" w={239} textW={174} clip />
          <Tab active icon={<FcGoogle />} text="jim loman shriner > pirate - Goog" w={240} textW={176} clip />
        </div>
        <div className="ml-[8px] flex items-center pt-[11px]"><NewTab /></div>
        <div className="mr-[5px] ml-auto"><Caption tone="red" /></div>
      </div>
      <div className="h-[70px] shrink-0"><Toolbar host="google.com" path="/search?rlz=1C1MSIV_enUS620US620&sxsrf=ALeKk01wxUJtXHpbKKBcnU5cU7cvkxDZ..." hostW={611} target /></div>
      <div className="flex h-[898px] shrink-0">
        <SearchPage />
        <div className="flex w-4 shrink-0 flex-col items-center bg-[#f1f1f1] pb-[3px] text-[7px] leading-[16px] text-[#505050]">
          <span className="text-[#a3a3a3]">▲</span>
          <div className="h-[328px] w-[14px] bg-[#c1c1c1]" />
          <span className="mt-auto">▼</span>
        </div>
      </div>
      <div className="flex h-[17px] shrink-0 items-center bg-[#f1f1f1] pl-[5px] text-[7px] text-[#505050]">
        <span className="w-[12px] text-[#a3a3a3]">◀</span>
        <div className="h-[14px] w-[1014px] bg-[#c1c1c1]" />
        <span className="mr-[22px] ml-auto">▶</span>
      </div>
    </div>
  );
}

/* ---------- middle display ---------- */
const procs: [string, string, string, string][] = [
  ["1,017,860K", "124.8", "244 B/s", "8468"], ["794,620K", "15.6", "0", "24280"], ["308,688K", "0.0", "0", "18312"], ["289,604K", "1.6", "0", "16464"],
  ["221,892K", "0.0", "0", "16500"], ["", "", "", ""], ["183,360K", "0.0", "0", "24380"], ["137,036K", "10.9", "0", "7036"], ["126,336K", "0.0", "0", "7724"],
  ["91,688K", "0.0", "0", "20856"], ["", "", "", ""], ["", "", "", ""], ["", "", "", ""], ["", "", "", "25836"], ["", "", "", "22672"], ["", "", "", "8728"], ["", "", "", "7040"], ["", "", "", "6388"],
];
const lavender = "bg-[linear-gradient(180deg,#fbfbfe,#e6e8f5_45%,#d5daec_46%,#dfe3f3)]";
function MiddleDisplay() {
  return (
    <div className="relative h-[1080px] w-[1920px] overflow-hidden bg-black">
      {/* maximised window at the very back */}
      <div className="absolute top-0 left-0 h-[43px] w-[1920px]">
        <div className="flex h-[22px] justify-end bg-[linear-gradient(90deg,#9ed3ee_60%,#d5f7f8_64%,#bfe9f3_74%,#cfeef5_80%,#eefcfd_84%,#effdfd_90%,#9fd0e2_93%,#7fb6cd)] pr-[4px]"><Caption restore /></div>
        <div className={"h-[21px] " + lavender} />
      </div>
      {/* file explorer on the right */}
      <div className="absolute top-[254px] left-[1700px] flex h-[790px] w-[220px] flex-col bg-[#fcfcfd] text-[12px] text-[#6d6d6d]">
        <div className="h-[34px] border-t border-[#777] bg-gradient-to-b from-[#3a3a3a] to-black pl-[207px]"><div className="h-[17px] w-5 rounded-b border border-[#999] pt-[8px] pl-[7px]"><div className="h-1 w-2 bg-white" /></div></div>
        <div className="h-[29px] bg-gradient-to-b from-[#d5d8d9] via-[#c9cccd] to-[#dff3fa] pt-[4px] pl-[157px] text-[13px] italic"><Fit w={62}>h Adobe Proj</Fit></div>
        <div className={"h-[21px] border-t border-[#555] " + lavender} />
        <div className="flex h-[32px] items-center border-b border-[#b8c6da] bg-gradient-to-b from-[#f5f8fc] to-[#dbe5f2] pl-[187px]">
          <svg viewBox="0 0 16 14" className="h-[14px] w-4" stroke="#667" fill="none"><path d="M1 2h3M1 7h3M1 12h3M6 2h9M6 7h9M6 12h9" strokeDasharray="3 1" /></svg>
          <span className="ml-[9px] text-[8px] text-[#1b2c50]">▼</span>
        </div>
        <div className="mt-auto flex h-[46px] flex-col items-end pt-[3px] pr-[97px] leading-[20px]"><Fit w={35}>260 KB</Fit><div className="flex gap-[36px]"><Fit w={26}>Aud...</Fit><Fit w={44}>3,642 KB</Fit></div></div>
      </div>
      {/* plain document window */}
      <div className="absolute top-[471px] left-[1700px] flex h-[541px] w-[210px] flex-col rounded-[6px] border border-[#555] bg-[#f8fafa] pr-[7px] pb-[7px] shadow-[0_1px_8px_2px_rgba(0,0,0,.4)]">
        <div className="flex h-[29px] justify-end"><Caption /></div>
        <div className={"h-[20px] border border-[#777] " + lavender} />
        <div className="flex flex-1 justify-end border-r border-b border-[#777] bg-white"><div className="flex w-4 flex-col justify-between bg-[#f0f0f0] py-1 text-center text-[7px] text-[#777]"><span>▲</span><span>▼</span></div></div>
      </div>
      {/* stacked glass windows */}
      <div className="absolute top-[22px] left-[1100px] flex h-[60px] w-[337px] justify-end rounded-tr-[6px] border border-[#5a6a70] bg-[linear-gradient(90deg,#d5f5f8,#dcf9f8_50%,#f0fbfb)] pr-[6px]"><Caption /></div>
      <div className="absolute top-[67px] left-[1700px] h-[90px] w-[100px] bg-[#373f43]" />
      <div className="absolute top-[48px] left-[1100px] flex h-[60px] w-[361px] justify-end rounded-tr-[6px] border border-[#868f93] bg-[linear-gradient(90deg,#0c0e10,#3a4248_25%,#2d3134_60%,#a9b8c9_75%,#2b2e31_97%)] pr-[5px]"><Caption tone="dark" /></div>
      <div className="absolute top-[68px] left-[1100px] flex h-[100px] w-[682px] flex-col overflow-hidden rounded-tr-[6px] border border-[#8f9a9f] bg-[linear-gradient(90deg,#cdeef5,#d9f3fb_50%,#b9cbdc_52%,#37454f_54%,#2f3a42_75%,#68757c)] pr-[6px]">
        <div className="h-[34px] bg-gradient-to-b from-[#3d464b]/80 to-transparent"><div className="flex justify-end"><Caption tone="dark" /></div></div>
        <div className="flex h-[23px] shrink-0 items-center">
          <div className="flex h-[22px] w-[477px] items-center justify-end border border-[#525c62] bg-[linear-gradient(90deg,#eafafb,#e5f2f7_60%,#b5bcc0)] text-[8px] text-[#102060]"><span className="mr-[8px]">▼</span><span className="flex h-full w-[25px] items-center justify-center border-l border-[#525c62] bg-[#dfe3e5] text-[13px] text-[#2166bd]">↯</span></div>
          <div className="ml-[6px] flex h-[22px] flex-1 items-center justify-between border border-[#525c62] bg-gradient-to-b from-[#c4c8ca] to-[#d9dcde] pr-[4px] pl-[8px] text-[12px] text-[#6c6f71] italic"><Fit w={112}>Search New folder (4)</Fit><MdSearch className="size-[15px] -scale-x-100 text-[#2b62a8]" /></div>
        </div>
        <div className={"mt-[5px] h-[40px] border border-[#333] " + lavender} />
      </div>
      {/* task manager */}
      <div className="absolute top-[155px] left-[1100px] flex h-[791px] w-[757px] flex-col overflow-hidden rounded-[6px] border border-[#5f6a70] bg-white pr-[6px] shadow-[0_1px_9px_3px_rgba(0,0,0,.45)]">
        <div className="-mr-[6px] flex h-[27px] shrink-0 justify-end bg-[linear-gradient(90deg,#cfeef0,#ddf8f8_28%,#effcfc_33%,#daf6fb_50%,#d8fbfb_89%,#3c3f42_91%,#2c2e30)] pr-[5px]"><Caption tone="dark" /></div>
        <div className="flex flex-1 flex-col border-t border-r border-b border-[#444] bg-white pt-[17px]">
          <div className="flex h-[666px] border border-[#ddd] text-[12px] text-[#202124]">
            <div className="flex w-[714px] flex-col">
              <div className="flex h-[24px] items-center justify-end border-b border-[#ddd]">
                <div className="flex h-[20px] w-[142px] items-center justify-end border-x border-[#ccc] pr-[12px]"><Fit w={95}>Memory footprint</Fit><span className="ml-[6px] text-[11px]">▼</span></div>
                <div className="flex h-[20px] w-[69px] items-center justify-end border-r border-[#ccc] pr-[6px]"><Fit w={23}>CPU</Fit></div>
                <div className="flex h-[20px] w-[92px] items-center justify-end border-r border-[#ccc] pr-[6px]"><Fit w={46}>Network</Fit></div>
                <div className="flex h-[20px] w-[101px] items-center justify-end border-r border-[#ccc] pr-[6px]"><Fit w={55}>Process ID</Fit></div>
              </div>
              {procs.map((r, i) => (
                <div key={i} className="flex h-8 shrink-0 items-center justify-end text-right tracking-[-0.4px]">
                  <span className="w-[142px]">{r[0]}</span><span className="w-[69px]">{r[1]}</span><span className="w-[92px]">{r[2]}</span><span className="w-[101px]">{r[3]}</span>
                </div>
              ))}
            </div>
            <div className="flex flex-1 flex-col items-center bg-[#f2f2f2] text-[8px] leading-[18px]"><span>▲</span><div className="flex h-[305px] w-[15px] flex-col items-center justify-center gap-[2px] rounded-[2px] border border-[#888] bg-gradient-to-r from-[#f3f3f3] to-[#c8c8c8]"><div className="h-px w-2 bg-[#555]" /><div className="h-px w-2 bg-[#555]" /><div className="h-px w-2 bg-[#555]" /></div><span className="mt-auto">▼</span></div>
          </div>
          <div className="mt-[24px] mr-[17px] flex h-8 w-[97px] items-center justify-center self-end rounded bg-[#1a73e8] text-[12px] font-bold text-white"><Fit w={65}>End process</Fit></div>
        </div>
        <div className="h-[6px] shrink-0" />
      </div>
      {/* session timeout browser */}
      <div className="absolute top-[549px] left-[1100px] flex h-[540px] w-[618px] flex-col rounded-tr-[8px] border border-[#555] bg-white pr-[7px] shadow-[0_1px_9px_3px_rgba(0,0,0,.45)]">
        <div className="flex h-[48px] items-start pl-[80px]">
          <div className="mt-[15px] flex items-center"><Fit w={10} className="text-[12px] text-[#45494d]">rd</Fit><MdClose className="ml-[39px] size-[15px] text-[#5f6368]" /><div className="w-[23px]" /><NewTab /></div>
          <div className="ml-auto"><Caption /></div>
        </div>
        <div className="ml-[80px]"><Toolbar short host="" path="son=session-timeout" hostW={130} badge="2" /></div>
        <div className="mt-[342px] pl-[82px] text-[13px]"><Fit w={48}>l-Shift-N)</Fit></div>
      </div>
      <SearchWindow />
      <MidTaskbar />
    </div>
  );
}

/* ---------- OBS ---------- */
const Btn = ({ t, w }: { t: string; w: number }) => (
  <div className="flex h-[22px] shrink-0 items-center justify-center rounded-[2px] bg-[#4c4c4c]"><Fit w={w}>{t}</Fit></div>
);
function Dock({ title, w, tw, children }: { title: string; w: number; tw: number; children: ReactNode }) {
  return (
    <div className="flex h-full shrink-0 flex-col" style={{ width: w }}>
      <div className="relative flex h-[21px] shrink-0 items-center justify-center bg-[#464646]"><Fit w={tw}>{title}</Fit>
        <svg viewBox="0 0 12 12" className="absolute right-[1px] size-[12px]" fill="none" stroke="#d0d0d0"><path d="M1 7V1h6v3M1 2h6M4.500 5.500h7v6h-7zM4.500 6.500h7" /></svg>
      </div>
      {children}
    </div>
  );
}
const Sym = ({ d }: { d: string }) => <svg viewBox="0 0 16 16" className="size-4" fill="none" stroke="#d0d0d0" strokeWidth="1.400"><path d={d} /></svg>;
const PLUS = "M0 8h16M8 0v16", MINUS = "M0 8h16", UP = "m1 12 7-8 7 8", DOWN = "m1 4 7 8 7-8";
function Channel({ name, nw, live }: { name: string; nw: number; live?: boolean }) {
  return (
    <div className="flex h-[63px] shrink-0 flex-col pl-[5px]">
      <div className="flex h-[18px] w-[344px] shrink-0 items-end justify-between pb-[2px] leading-[14px]"><Fit w={nw}>{name}</Fit><Fit w={27}>0.0 dB</Fit></div>
      <div className="flex h-[7px] w-[344px] shrink-0 flex-col gap-[1px]">
        {[0, 1].map((k) => (
          <div key={k} className="relative flex h-[3px] bg-[linear-gradient(90deg,#267f26_67.2%,#7f7f26_67.2%_85.2%,#7f2626_85.2%)]">
            <div className="absolute left-[3px] h-[3px] w-[1px] bg-[#1f1f1f]" />
            {live && <><div className="absolute left-[5px] h-[3px] w-[23px] bg-[#4cff4c]" /><div className="absolute left-[93px] h-[3px] w-[3px] bg-[#4cff4c]" /></>}
          </div>
        ))}
      </div>
      <div className="ml-[5px] h-[4px] w-[339px] shrink-0 bg-[linear-gradient(90deg,#bbb_1px,transparent_1px)] bg-[length:28.1px_4px]"><div className="h-[2px] bg-[linear-gradient(90deg,#888_1px,transparent_1px)] bg-[length:5.62px_2px]" /></div>
      <div className="flex h-[6px] w-[349px] shrink-0 justify-between font-['Liberation_Sans'] text-[7.5px] leading-[6px]">
        {["-60", "-55", "-50", "-45", "-40", "-35", "-30", "-25", "-20", "-15", "-10", "-5", "0"].map((n) => <span key={n} className="flex w-[12px] justify-center">{n}</span>)}
      </div>
      <div className="flex h-[24px] shrink-0 items-center">
        <div className="h-[4px] w-[268px] rounded-l bg-[#2a82da]" /><div className="h-[9px] w-[18px] rounded-[2px] bg-[#d4d4d4]" />
        <FaVolumeUp className="ml-[8px] size-[19px] text-[#d4d4d4]" /><FaCog className="ml-[12px] size-[16px] text-[#d4d4d4]" />
      </div>
    </div>
  );
}
function ObsWindow() {
  return (
    <div className="absolute top-[267px] left-[1212px] flex h-[768px] w-[1094px] flex-col rounded-[7px] border border-[#555] bg-white px-[6px] pb-[6px] shadow-[0_1px_10px_3px_rgba(0,0,0,.45)]">
      <div className="flex h-[29px] shrink-0 items-start">
        <Obs className="mt-[8px] size-[15px]" /><Fit w={344} className="mt-[5px] ml-[7px] text-[14px] text-black">OBS 25.0.8 (64-bit, windows) - Profile: Untitled - Scenes: Untitled</Fit>
        <div className="ml-auto"><Caption /></div>
      </div>
      <div className="flex flex-1 flex-col overflow-hidden bg-[#383838] text-[12px] leading-[16px] text-[#dedede]">
        <div className="flex h-[22px] shrink-0 items-center gap-[16px] pl-[9px]">
          <Fit w={18}>File</Fit><Fit w={20}>Edit</Fit><Fit w={25}>View</Fit><Fit w={34}>Profile</Fit><Fit w={88}>Scene Collection</Fit><Fit w={28}>Tools</Fit><Fit w={25}>Help</Fit>
        </div>
        <div className="h-[517px] shrink-0 bg-[#4c4c4c] pt-[10px] pl-[100px]">
          <div className="relative h-[496px] w-[881px] overflow-hidden">
            <div className="h-[1080px] w-[1920px] origin-top-left scale-[0.459]"><MiddleDisplay /></div>
            <svg viewBox="0 0 10 16" className="absolute top-[179px] left-[414px] h-[9px] w-[6px]"><path d="M1 0v13l3-3 2 5 2-1-2-5h4z" fill="#fff" stroke="#333" /></svg>
          </div>
        </div>
        <div className="mt-[4px] flex h-[164px] shrink-0 gap-[4px]">
          <Dock title="Scenes" w={182} tw={35}>
            <div className="flex-1 bg-[#1f1f1f] pt-px"><div className="mx-px h-[17px] bg-[#303030] pl-[3px] text-white"><Fit w={31}>Scene</Fit></div></div>
            <div className="flex h-[28px] items-center gap-[10px] border border-[#1f1f1f] bg-[#3a3a3a] pl-[7px]"><Sym d={PLUS} /><Sym d={MINUS} /><div className="-mr-[3px] h-5 w-px bg-[#2a2a2a]" /><Sym d={UP} /><Sym d={DOWN} /></div>
          </Dock>
          <Dock title="Sources" w={181} tw={38}>
            <div className="flex-1 bg-[#1f1f1f] pt-[2px]">
              {["Display Capture 2", "Display Capture 1"].map((t) => (
                <div key={t} className="flex h-[17px] items-center pl-[5px]"><Monitor className="mr-[7px] size-[16px] text-[#d4d4d4]" /><Fit w={86}>{t}</Fit><Eye className="ml-[27px] size-[15px] text-white" strokeWidth={2.5} /><Unlock className="ml-[8px] size-[14px] text-[#888]" fill="#666" /></div>
              ))}
            </div>
            <div className="flex h-[28px] items-center gap-[10px] border border-[#1f1f1f] bg-[#3a3a3a] pl-[7px]"><Sym d={PLUS} /><Sym d={MINUS} /><FaCog className="size-[15px] text-[#d0d0d0]" /><div className="-mr-[3px] h-5 w-px bg-[#2a2a2a]" /><Sym d={UP} /><Sym d={DOWN} /></div>
          </Dock>
          <Dock title="Audio Mixer" w={368} tw={56}>
            <div className="flex flex-1 overflow-hidden bg-[#1f1f1f]">
              <div className="flex w-[355px] flex-col"><Channel name="Desktop Audio" nw={61} /><Channel name="Mic/Aux" nw={33} live /><div className="ml-[5px] flex w-[344px] justify-between pt-[1px] leading-[14px]"><Fit w={41}>Mic/Aux 2</Fit><Fit w={27}>0.0 dB</Fit></div></div>
              <div className="mt-[3px] h-[101px] w-[10px] rounded-full bg-[#4c4c4c]" />
            </div>
          </Dock>
          <Dock title="Scene Transitions" w={132} tw={84}>
            <div className="flex flex-col px-[4px] pt-[4px]">
              <div className="flex h-[20px] items-center justify-between rounded-[2px] bg-[#4c4c4c] pr-[5px] pl-[9px]"><Fit w={24}>Fade</Fit><span className="flex h-full flex-col justify-center border-l border-[#383838] pl-[5px]"><svg viewBox="0 0 8 14" className="h-[13px] w-[8px]" fill="none" stroke="#ccc"><path d="m1 4 3-3 3 3M1 10l3 3 3-3" /></svg></span></div>
              <div className="flex h-[26px] items-center justify-end gap-[10px] pr-[2px]"><Sym d={PLUS} /><Sym d={MINUS} /><FaCog className="size-[16px] text-[#d4d4d4]" /></div>
              <div className="flex h-[21px] items-center"><Fit w={41}>Duration</Fit><div className="ml-[5px] flex h-full w-[63px] items-center bg-[#1f1f1f] pl-[8px]"><Fit w={34}>300 ms</Fit></div><div className="flex h-full w-[15px] items-center justify-center bg-[#4c4c4c]"><svg viewBox="0 0 12 18" className="h-[17px] w-[12px]" fill="none" stroke="#ccc"><path d="m2 6 4-4 4 4M2 12l4 4 4-4M0 9h12" /></svg></div></div>
            </div>
          </Dock>
          <Dock title="Controls" w={199} tw={40}>
            <div className="flex flex-col gap-px px-[4px] pt-[2px]"><Btn t="Start Streaming" w={75} /><Btn t="Start Recording" w={75} /><Btn t="Studio Mode" w={59} /><Btn t="Settings" w={39} /><Btn t="Exit" w={19} /></div>
          </Dock>
        </div>
        <div className="flex flex-1 items-center pl-[678px]">
          <Radio className="size-[18px] text-[#888]" /><Fit w={73} className="ml-[6px]">LIVE: 00:00:00</Fit><span className="mr-[11px] ml-[11px] size-[10px] rounded-full bg-[#999]" /><Fit w={72}>REC: 00:00:00</Fit><Fit w={101} className="ml-[26px]">CPU: 0.8%, 7.73 fps</Fit>
        </div>
      </div>
    </div>
  );
}

/* ---------- displays ---------- */
function LeftDisplay() {
  return (
    <div className="relative flex h-[1440px] w-[2560px] flex-col overflow-hidden bg-white">
      <div className="flex h-[34px] shrink-0 bg-[linear-gradient(180deg,transparent_70%,rgba(190,255,255,.6)),linear-gradient(100deg,#e8fbff_18%,#93deff_21%,#8fdcff_23%,#80c8ff_24.5%,#7fc6ff_34%,#93deff_36%,#80c8f5_40%,#62a6dc_45%,#6ba9df_47%,#93deff_50%,#93deff_57%,#68a8dc_61%,#72bdf3_66%,#6db9f0_90%,#8fd4fa_97%,#c4f8ff)]">
        <Tab active icon={<SadPage small />} text="00 Main | Trello" w={247} textW={83} />
        <div className="flex w-[240px] items-center gap-[14px] bg-white/80 pl-[8px]"><NewTab /><div className="h-3 w-[160px] bg-[#a9d8f0] opacity-50 blur-[5px]" /></div>
        <div className="mr-[3px] ml-auto"><Caption restore /></div>
      </div>
      <Toolbar host="trello.com" path="/b/vKHb0OIE/00-main" hostW={199} badge="5" extra />
      <div className="mt-[354px] ml-[980px]"><CantOpen /></div>
      <ObsWindow />
      <div className="mt-auto flex h-10 shrink-0 items-center border-t border-[#16262e] bg-[linear-gradient(90deg,#3d6473,#2d5768_35%,#34687a_60%,#3e7486_85%,#2b5260)] pl-[2px]">
        {leftTasks.map((b, i) => <TaskButton key={i} b={b} width={158} pitch={162} pad={7} />)}
      </div>
    </div>
  );
}
function RightDisplay() {
  return (
    <div className="relative h-[1024px] w-[1280px] overflow-hidden bg-white">
      <div className="absolute top-0 left-[1100px] flex h-[76px] w-[180px] flex-col">
        <div className="flex h-[34px] justify-end bg-gradient-to-b from-[#6ba5c0] to-[#a4d3e4] pr-[4px]"><Caption restore /></div>
        <div className="flex h-[36px] items-center justify-end gap-[11px] pr-[14px]"><Pill /><UpdateDot /></div>
      </div>
      <div className="absolute top-[76px] left-[1100px] flex h-[115px] w-[180px] flex-col border-t border-b border-[#777] border-b-[#dadce0] bg-white">
        <div className="flex h-[46px] justify-end bg-gradient-to-b from-white to-[#f4f4f4]"><Caption /></div>
        <div className="flex h-[36px] items-center justify-end gap-[11px] pr-[14px]"><Pill /><UpdateDot /></div>
        <div className="flex h-[30px] items-center justify-end pr-[14px] text-[12px] text-[#3c4043]"><Fit w={93}>Other bookmarks</Fit></div>
      </div>
      <div className="absolute top-[1px] left-0 flex h-[983px] w-[1181px] flex-col overflow-hidden rounded-[7px] border border-[#444] bg-[linear-gradient(180deg,#d9fbfd,#c9f2f8_12%,#fdfdfd_22%,#fff)] px-[7px] shadow-[0_1px_9px_3px_rgba(0,0,0,.45)]">
        <div className="-mx-[7px] flex h-[45px] shrink-0 bg-[linear-gradient(90deg,#fff_25%,#ecfcfd_35%,#cdf5f8_42%,#eafbfc_55%,#c9f3f8_63%,#e6fbfc_75%,#d0f5fa_88%,#8cc8e6_93%,#c2ecf5)] pl-[16px]">
          <div className="flex pt-[11px]"><Tab active icon={<SadPage small />} text="Perfectfire33/flaskr at ebay_api_ad" w={240} textW={176} clip /></div>
          <div className="ml-[8px] pt-[14px]"><NewTab /></div>
          <div className="mt-[12px] ml-[10px] flex flex-1 gap-[120px] opacity-60 blur-[4px]">{["#48689a", "#48689a", "#4c7dcc", "#4c7dcc", "#c9506c"].map((c, i) => <div key={i} className="size-[14px] rounded-full" style={{ background: c }} />)}</div>
          <div className="mr-[5px]"><Caption /></div>
        </div>
        <div className="flex flex-1 flex-col bg-white">
          <Toolbar host="github.com" path="/Perfectfire33/flaskr/tree/ebay_api_additions" hostW={344} badge="1" />
          <div className="mt-[192px] ml-[282px]"><CantOpen feedback /></div>
          <div className="mt-auto flex h-[49px] items-center border-t border-[#d5d5d5] pr-[11px] pl-[19px] text-[12px] text-[#3c4043]">
            <svg viewBox="0 0 16 16" className="size-4"><path d="M2 0h11l2 2v4H2z" fill="#b0217c" /><path d="M1 6h13v4H1z" fill="#1d5fc4" /><path d="M2 10h13v5H2z" fill="#1c8a4c" /><path d="M0 5h14M1 10h14M6 0v16" stroke="#222" /></svg>
            <Fit w={124} className="ml-[13px]">flaskr-ebay_api_ad....zip</Fit>
            <svg viewBox="0 0 10 6" className="ml-[29px] h-[6px] w-[10px]" fill="none" stroke="#5f6368" strokeWidth="1.600"><path d="m1 5 4-4 4 4" /></svg>
            <div className="ml-[18px] h-[36px] w-px bg-[#ccc]" />
            <div className="ml-auto flex h-[31px] w-[77px] items-center justify-center rounded border border-[#d5d8dc]"><Fit w={46}>Show all</Fit></div>
            <MdClose className="ml-[10px] size-[16px] text-[#5f6368]" />
          </div>
        </div>
        <div className="h-[7px] shrink-0" />
      </div>
      <div className="absolute top-[984px] left-0 flex h-10 w-[1280px] items-center border-t border-[#2a3a46] bg-[linear-gradient(90deg,#7f9cba,#8aa5bf_60%,#7f9ab5)] pl-[2px]">
        {rightTasks.map((b, i) => <TaskButton key={i} b={b} width={81} pitch={84.1} pad={9} />)}
      </div>
    </div>
  );
}

export default function App() {
  return (
    <div className="h-[1024px] w-[4096px] overflow-hidden bg-black">
      <div className="flex h-[1440px] w-[5760px] origin-top-left scale-[0.71111] items-start font-['Open_Sans',sans-serif]">
        <LeftDisplay />
        <div className="mt-[162px]"><MiddleDisplay /></div>
        <div className="mt-[218px]"><RightDisplay /></div>
      </div>
    </div>
  );
}
